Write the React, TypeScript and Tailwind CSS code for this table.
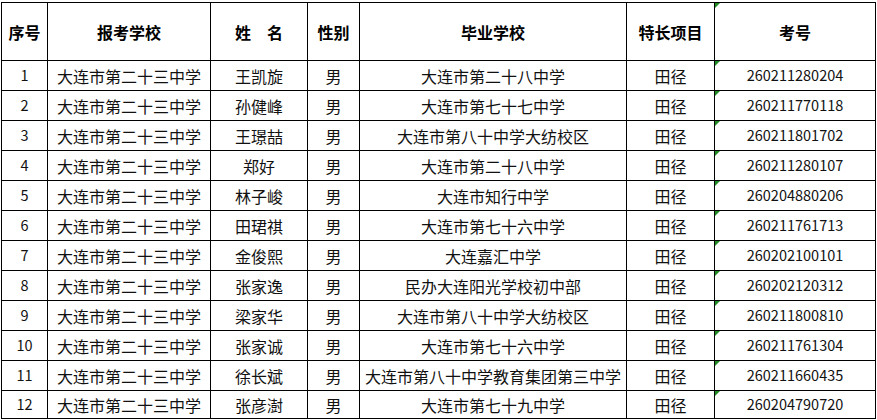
import React from "react";

const rows: [string, string, string, string, string, string, string][] = [
  ["1", "大连市第二十三中学", "王凯旋", "男", "大连市第二十八中学", "田径", "260211280204"],
  ["2", "大连市第二十三中学", "孙健峰", "男", "大连市第七十七中学", "田径", "260211770118"],
  ["3", "大连市第二十三中学", "王璟喆", "男", "大连市第八十中学大纺校区", "田径", "260211801702"],
  ["4", "大连市第二十三中学", "郑好", "男", "大连市第二十八中学", "田径", "260211280107"],
  ["5", "大连市第二十三中学", "林子峻", "男", "大连市知行中学", "田径", "260204880206"],
  ["6", "大连市第二十三中学", "田珺祺", "男", "大连市第七十六中学", "田径", "260211761713"],
  ["7", "大连市第二十三中学", "金俊熙", "男", "大连嘉汇中学", "田径", "260202100101"],
  ["8", "大连市第二十三中学", "张家逸", "男", "民办大连阳光学校初中部", "田径", "260202120312"],
  ["9", "大连市第二十三中学", "梁家华", "男", "大连市第八十中学大纺校区", "田径", "260211800810"],
  ["10", "大连市第二十三中学", "张家诚", "男", "大连市第七十六中学", "田径", "260211761304"],
  ["11", "大连市第二十三中学", "徐长斌", "男", "大连市第八十中学教育集团第三中学", "田径", "260211660435"],
  ["12", "大连市第二十三中学", "张彦澍", "男", "大连市第七十九中学", "田径", "260204790720"],
];

const headers = ["序号", "报考学校", "姓　名", "性别", "毕业学校", "特长项目", "考号"];

function Tri() {
  return (
    <span className="absolute top-0 left-0 w-0 h-0 border-t-[5px] border-t-[#1f8a1f] border-r-[5px] border-r-transparent" />
  );
}

export default function App() {
  return (
    <div className="w-[877px] h-[420px] bg-white overflow-hidden pl-[1px] pt-[2px] text-black [font-family:'Noto_Sans_CJK_SC',sans-serif]">
      <div className="w-fit border-l border-t border-black grid grid-cols-[46px_163px_97px_52px_267px_88px_161px] grid-rows-[58px_repeat(11,30px)_28px]">
        {headers.map((h, i) => (
          <div
            key={h}
            className="relative border-r border-b border-black flex items-center justify-center font-bold text-[16px] leading-none whitespace-nowrap"
          >
            {i === 6 && <Tri />}
            {h}
          </div>
        ))}
        {rows.map((r) =>
          r.map((c, i) => {
            const numeric = i === 0 || i === 6;
            return (
              <div
                key={r[0] + "-" + i}
                className={
                  numeric
                    ? "relative border-r border-b border-black flex items-center justify-center text-[14.5px] text-[#111] leading-none whitespace-nowrap"
                    : "relative border-r border-b border-black flex items-center justify-center text-[16px] text-[#111] leading-none whitespace-nowrap"
                }
              >
                {i === 6 && <Tri />}
                {c}
              </div>
            );
          })
        )}
      </div>
    </div>
  );
}
